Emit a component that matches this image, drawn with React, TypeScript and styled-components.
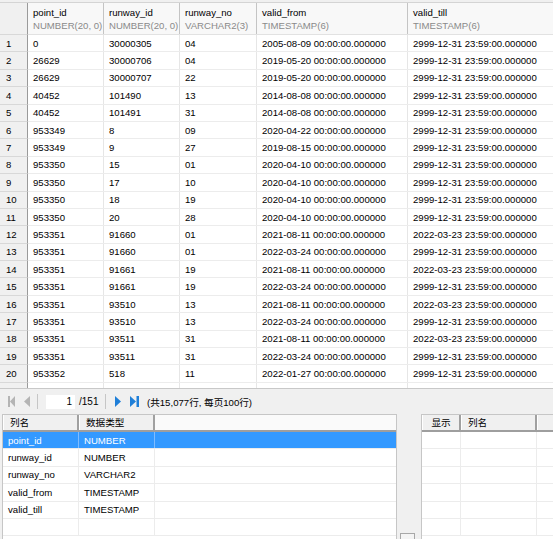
import React from 'react';
import styled, { createGlobalStyle } from 'styled-components';

const GlobalStyle = createGlobalStyle`
  html, body {
    margin: 0;
    padding: 0;
    background: #f0f0f0;
  }
  body {
    font-family: 'Liberation Sans', 'Noto Sans CJK SC', sans-serif;
    font-size: 9.6px;
    color: #000;
  }
`;

const ROW_H = 17.4;
const COLS = [76, 76, 77, 151, 160];

const Page = styled.div`
  width: 553px;
  height: 539px;
  overflow: hidden;
  background: #f0f0f0;
  display: flex;
  flex-direction: column;
  padding-top: 2px;
  box-sizing: border-box;
`;

const Grid = styled.div`
  height: 387px;
  flex-shrink: 0;
  overflow: hidden;
  background: #fff;
  border-top: 1px solid #d4d4d4;
  border-bottom: 1px solid #c8c8c8;
  box-sizing: border-box;
`;

const GridRow = styled.div<{ $header?: boolean }>`
  display: flex;
  height: ${(p) => (p.$header ? '32px' : `${ROW_H}px`)};
  background: ${(p) => (p.$header ? '#f8f8f8' : '#fff')};
  border-bottom: 1px solid ${(p) => (p.$header ? '#e2e2e2' : '#ececec')};
  box-sizing: border-box;
`;

const RowNum = styled.div`
  width: 28px;
  flex-shrink: 0;
  background: #f0f0f0;
  border-right: 1px solid #9a9a9a;
  border-bottom: 1px solid #d8d8d8;
  margin-bottom: -1px;
  box-sizing: border-box;
  padding-left: 6px;
  display: flex;
  align-items: center;
`;

const Cell = styled.div<{ $w: number; $header?: boolean }>`
  width: ${(p) => p.$w}px;
  flex-shrink: 0;
  box-sizing: border-box;
  padding-left: 5px;
  border-right: 1px solid ${(p) => (p.$header ? '#c4c4c4' : '#e6e6e6')};
  white-space: nowrap;
  overflow: hidden;
  display: flex;
  flex-direction: column;
  justify-content: center;
  line-height: 13px;
`;

const TypeText = styled.span`
  color: #8a8a8a;
`;

const Toolbar = styled.div`
  height: 25px;
  flex-shrink: 0;
  display: flex;
  align-items: center;
  padding-left: 8px;
`;

const NavIcon = styled.svg<{ $gap?: number }>`
  display: block;
  flex-shrink: 0;
  margin-left: ${(p) => p.$gap ?? 0}px;
`;

const Sep = styled.div<{ $l: number; $r: number }>`
  width: 1px;
  height: 15px;
  background: #c6c6c6;
  margin: 0 ${(p) => p.$r}px 0 ${(p) => p.$l}px;
`;

const PageInput = styled.div`
  width: 29px;
  height: 14px;
  background: #fff;
  text-align: right;
  padding-right: 3px;
  box-sizing: border-box;
  line-height: 14px;
  font-size: 10px;
`;

const PageTotal = styled.span`
  font-size: 10px;
  margin-left: 4px;
  width: 20px;
`;

const Summary = styled.span`
  margin-left: 8px;
`;

const Bottom = styled.div`
  flex: 1;
  display: flex;
  align-items: flex-start;
  padding-left: 2px;
  overflow: hidden;
`;

const LeftPanel = styled.div`
  width: 395px;
  height: 130px;
  flex-shrink: 0;
  background: #fff;
  border: 1px solid #c6c6c6;
  border-bottom: none;
  box-sizing: border-box;
`;

const Splitter = styled.div`
  width: 24px;
  flex-shrink: 0;
  align-self: stretch;
  display: flex;
  align-items: flex-end;
  justify-content: center;
`;

const SplitButton = styled.div`
  width: 15px;
  height: 6px;
  border: 1px solid #a8a8a8;
  border-bottom: none;
  background: #f4f4f4;
  box-sizing: border-box;
  margin-right: 3px;
`;

const RightPanel = styled.div`
  flex: 1;
  height: 130px;
  background: #fff;
  border-left: 1px solid #c6c6c6;
  border-top: 1px solid #c6c6c6;
  box-sizing: border-box;
`;

const ListHeader = styled.div`
  display: flex;
  height: 17px;
  background: #f7f7f7;
  border-bottom: 2px solid #9e9e9e;
  box-sizing: border-box;
`;

const HeadCell = styled.div<{ $w?: number; $center?: boolean }>`
  width: ${(p) => (p.$w ? `${p.$w}px` : 'auto')};
  flex: ${(p) => (p.$w ? '0 0 auto' : '1')};
  box-sizing: border-box;
  background: #f0f0f0;
  border-right: ${(p) => (p.$w ? '2px solid #a0a0a0' : 'none')};
  border-left: 1px solid #fff;
  padding-left: ${(p) => (p.$center ? '0' : '6px')};
  text-align: ${(p) => (p.$center ? 'center' : 'left')};
  line-height: 15px;
  white-space: nowrap;
`;

const HeadFill = styled.div`
  flex: 1;
  background: #fafafa;
`;

const ListRow = styled.div<{ $selected?: boolean }>`
  display: flex;
  height: ${ROW_H}px;
  background: ${(p) => (p.$selected ? '#3399ff' : '#fff')};
  color: ${(p) => (p.$selected ? '#fff' : '#000')};
  border-bottom: 1px solid #ececec;
  box-sizing: border-box;
`;

const ListCell = styled.div<{ $w?: number; $selected?: boolean }>`
  width: ${(p) => (p.$w ? `${p.$w}px` : 'auto')};
  flex: ${(p) => (p.$w ? '0 0 auto' : '1')};
  box-sizing: border-box;
  padding-left: 5px;
  display: flex;
  align-items: center;
  border-right: ${(p) => (p.$w ? `1px solid ${p.$selected ? '#7fbcff' : '#ececec'}` : 'none')};
  white-space: nowrap;
`;

const rows: [string, string, string, string, string][] = [
  ['0', '30000305', '04', '2005-08-09', '2999-12-31'],
  ['26629', '30000706', '04', '2019-05-20', '2999-12-31'],
  ['26629', '30000707', '22', '2019-05-20', '2999-12-31'],
  ['40452', '101490', '13', '2014-08-08', '2999-12-31'],
  ['40452', '101491', '31', '2014-08-08', '2999-12-31'],
  ['953349', '8', '09', '2020-04-22', '2999-12-31'],
  ['953349', '9', '27', '2019-08-15', '2999-12-31'],
  ['953350', '15', '01', '2020-04-10', '2999-12-31'],
  ['953350', '17', '10', '2020-04-10', '2999-12-31'],
  ['953350', '18', '19', '2020-04-10', '2999-12-31'],
  ['953350', '20', '28', '2020-04-10', '2999-12-31'],
  ['953351', '91660', '01', '2021-08-11', '2022-03-23'],
  ['953351', '91660', '01', '2022-03-24', '2999-12-31'],
  ['953351', '91661', '19', '2021-08-11', '2022-03-23'],
  ['953351', '91661', '19', '2022-03-24', '2999-12-31'],
  ['953351', '93510', '13', '2021-08-11', '2022-03-23'],
  ['953351', '93510', '13', '2022-03-24', '2999-12-31'],
  ['953351', '93511', '31', '2021-08-11', '2022-03-23'],
  ['953351', '93511', '31', '2022-03-24', '2999-12-31'],
  ['953352', '518', '11', '2022-01-27', '2999-12-31'],
];

const headers = [
  ['point_id', 'NUMBER(20, 0)'],
  ['runway_id', 'NUMBER(20, 0)'],
  ['runway_no', 'VARCHAR2(3)'],
  ['valid_from', 'TIMESTAMP(6)'],
  ['valid_till', 'TIMESTAMP(6)'],
];

const fields = [
  ['point_id', 'NUMBER'],
  ['runway_id', 'NUMBER'],
  ['runway_no', 'VARCHAR2'],
  ['valid_from', 'TIMESTAMP'],
  ['valid_till', 'TIMESTAMP'],
];

const BLUE = '#1f7fd8';
const GREY = '#b4b4b4';

const App = () => (
  <Page>
    <GlobalStyle />
    <Grid>
      <GridRow $header>
        <RowNum />
        {headers.map(([name, type], i) => (
          <Cell key={name} $w={COLS[i]} $header>
            <span>{name}</span>
            <TypeText>{type}</TypeText>
          </Cell>
        ))}
      </GridRow>
      {rows.map((r, idx) => (
        <GridRow key={idx}>
          <RowNum>{idx + 1}</RowNum>
          <Cell $w={COLS[0]}>{r[0]}</Cell>
          <Cell $w={COLS[1]}>{r[1]}</Cell>
          <Cell $w={COLS[2]}>{r[2]}</Cell>
          <Cell $w={COLS[3]}>{`${r[3]} 00:00:00.000000`}</Cell>
          <Cell $w={COLS[4]}>{`${r[4]} 23:59:00.000000`}</Cell>
        </GridRow>
      ))}
      <GridRow>
        <RowNum />
        {COLS.map((w, i) => (
          <Cell key={i} $w={w} />
        ))}
      </GridRow>
    </Grid>

    <Toolbar>
      <NavIcon width="7" height="11" viewBox="0 0 7 11">
        <rect x="0" y="0" width="2" height="11" fill={GREY} />
        <path d="M7 0 L2 5.5 L7 11 Z" fill={GREY} />
      </NavIcon>
      <NavIcon $gap={9} width="6" height="11" viewBox="0 0 6 11">
        <path d="M6 0 L0 5.5 L6 11 Z" fill={GREY} />
      </NavIcon>
      <Sep $l={7} $r={8} />
      <PageInput>1</PageInput>
      <PageTotal>/151</PageTotal>
      <Sep $l={6} $r={9} />
      <NavIcon width="6" height="11" viewBox="0 0 6 11">
        <path d="M0 0 L6 5.5 L0 11 Z" fill={BLUE} />
      </NavIcon>
      <NavIcon $gap={9} width="9" height="11" viewBox="0 0 9 11">
        <path d="M0 0 L6 5.5 L0 11 Z" fill={BLUE} />
        <rect x="6.5" y="0" width="2.5" height="11" fill={BLUE} />
      </NavIcon>
      <Summary>(共15,077行, 每页100行)</Summary>
    </Toolbar>

    <Bottom>
      <LeftPanel>
        <ListHeader>
          <HeadCell $w={76}>列名</HeadCell>
          <HeadCell $w={76}>数据类型</HeadCell>
          <HeadFill />
        </ListHeader>
        {fields.map(([name, type], i) => (
          <ListRow key={name} $selected={i === 0}>
            <ListCell $w={76} $selected={i === 0}>{name}</ListCell>
            <ListCell $w={76} $selected={i === 0}>{type}</ListCell>
            <ListCell />
          </ListRow>
        ))}
        <ListRow>
          <ListCell $w={76} />
          <ListCell $w={76} />
          <ListCell />
        </ListRow>
      </LeftPanel>
      <Splitter>
        <SplitButton />
      </Splitter>
      <RightPanel>
        <ListHeader>
          <HeadCell $w={39} $center>显示</HeadCell>
          <HeadCell $w={76}>列名</HeadCell>
          <HeadCell />
        </ListHeader>
        {Array.from({ length: 6 }).map((_, i) => (
          <ListRow key={i}>
            <ListCell $w={39} />
            <ListCell $w={76} />
            <ListCell />
          </ListRow>
        ))}
      </RightPanel>
    </Bottom>
  </Page>
);

export default App;
